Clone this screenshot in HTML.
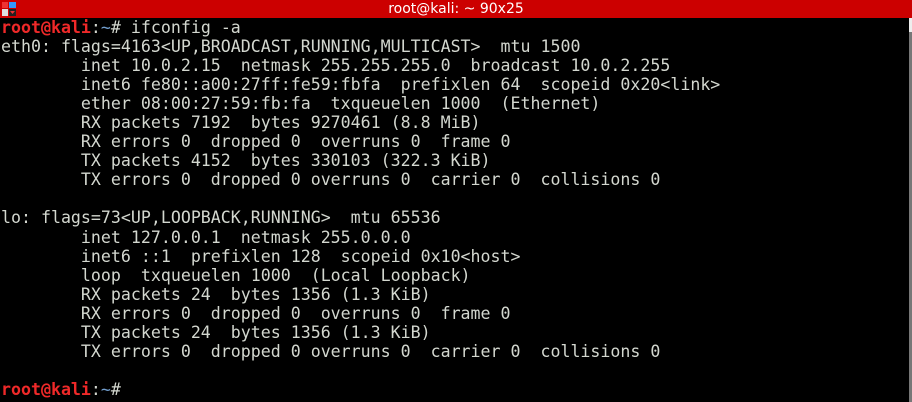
<!DOCTYPE html>
<html><head><style>
html,body{margin:0;padding:0;background:#000;width:912px;height:402px;overflow:hidden}
.t{position:absolute;left:0;top:0;width:912px;height:18px;background:#cc0000;color:#fff;font:14px "DejaVu Sans","Liberation Sans",sans-serif;text-align:center;line-height:18px}
.ic{position:absolute;left:2px;top:2px;width:14px;height:14px}
.sb{position:absolute;right:0;top:18px;width:3px;height:384px;background:#777}
.sb2{position:absolute;right:0;top:18px;width:3px;height:14px;background:#eee}
pre{position:absolute;left:1px;top:18px;margin:0;font-family:"DejaVu Sans Mono","Liberation Mono",monospace;font-size:16.6px;line-height:19.05px;color:#d3d7cf}
.r{color:#ef2929;font-weight:bold}.b{color:#729fcf}
</style></head><body>
<div class="t">root@kali: ~ 90x25</div>
<svg class="ic" viewBox="0 0 14 14"><rect x="0" y="0" width="6" height="6" fill="#e33"/><rect x="7" y="0" width="7" height="6" fill="#39f"/><rect x="0" y="7" width="6" height="7" fill="#ddd"/><rect x="7" y="7" width="7" height="7" fill="#222"/><path d="M8 9h5l-2.5 3z" fill="#e33"/></svg>
<div class="sb"></div><div class="sb2"></div>
<pre><span class="r">root@kali</span>:<span class="b">~</span># ifconfig -a
eth0: flags=4163&lt;UP,BROADCAST,RUNNING,MULTICAST&gt;  mtu 1500
        inet 10.0.2.15  netmask 255.255.255.0  broadcast 10.0.2.255
        inet6 fe80::a00:27ff:fe59:fbfa  prefixlen 64  scopeid 0x20&lt;link&gt;
        ether 08:00:27:59:fb:fa  txqueuelen 1000  (Ethernet)
        RX packets 7192  bytes 9270461 (8.8 MiB)
        RX errors 0  dropped 0  overruns 0  frame 0
        TX packets 4152  bytes 330103 (322.3 KiB)
        TX errors 0  dropped 0 overruns 0  carrier 0  collisions 0

lo: flags=73&lt;UP,LOOPBACK,RUNNING&gt;  mtu 65536
        inet 127.0.0.1  netmask 255.0.0.0
        inet6 ::1  prefixlen 128  scopeid 0x10&lt;host&gt;
        loop  txqueuelen 1000  (Local Loopback)
        RX packets 24  bytes 1356 (1.3 KiB)
        RX errors 0  dropped 0  overruns 0  frame 0
        TX packets 24  bytes 1356 (1.3 KiB)
        TX errors 0  dropped 0 overruns 0  carrier 0  collisions 0

<span class="r">root@kali</span>:<span class="b">~</span># </pre>
</body></html>
